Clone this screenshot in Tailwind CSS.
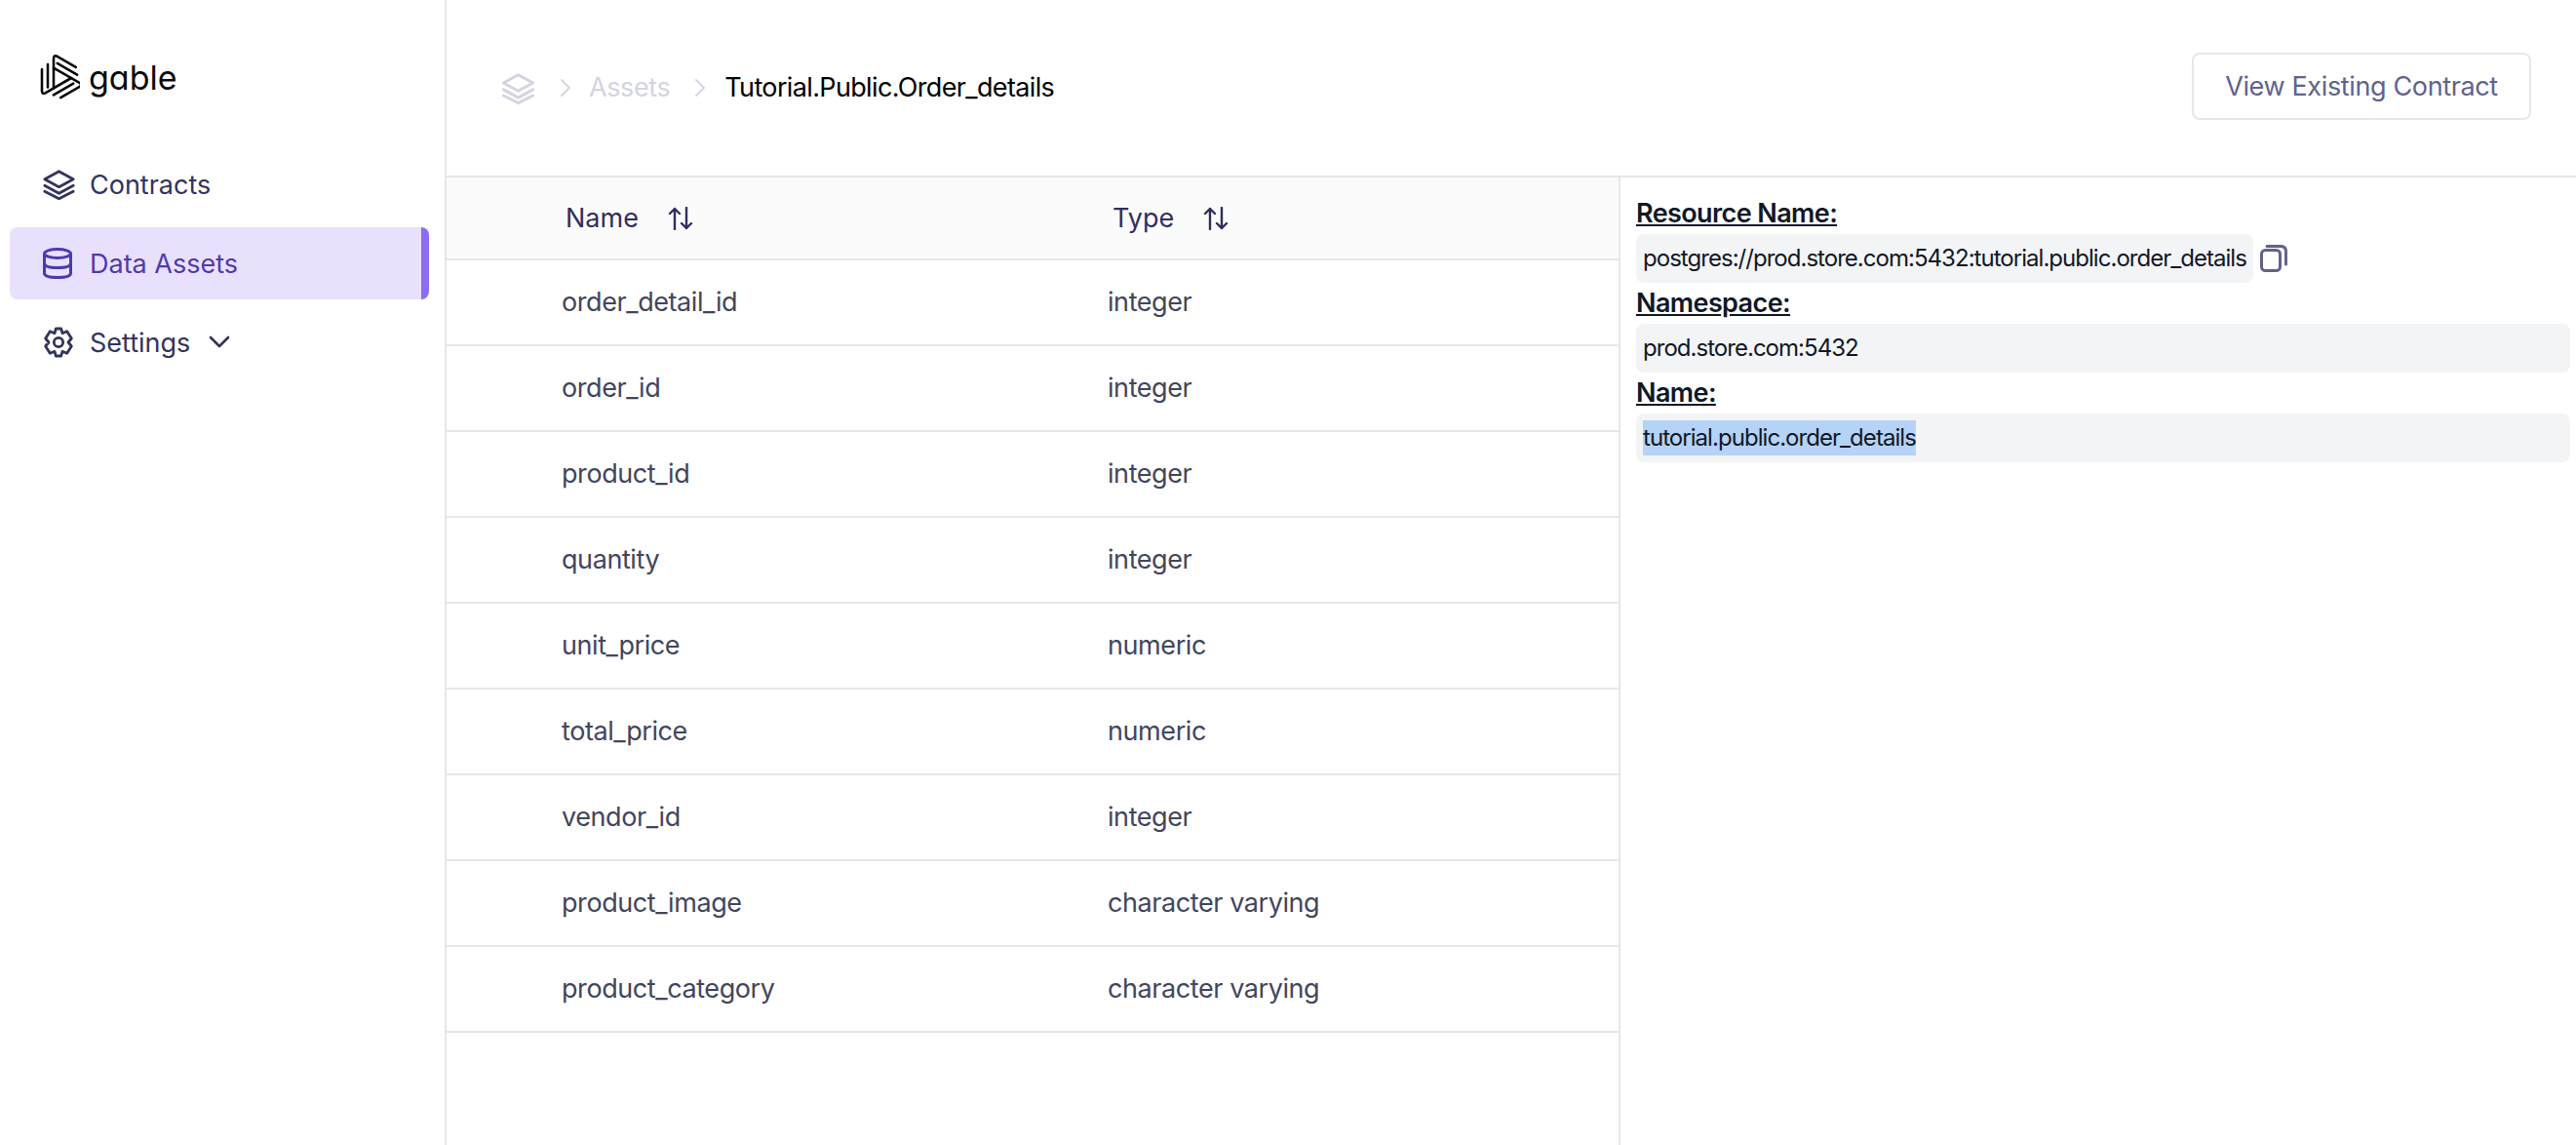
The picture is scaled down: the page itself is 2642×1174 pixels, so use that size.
<!DOCTYPE html>
<html lang="en">
  <head>
    <meta charset="UTF-8" />
    <title>Gable - Data Assets</title>
    <script src="https://cdn.jsdelivr.net/npm/@tailwindcss/browser@4"></script>
  </head>
  <body class="bg-white font-['Inter',sans-serif]">
    <div class="flex h-[1174px] w-[2642px] overflow-hidden">
      <!-- Sidebar -->
      <aside class="w-[458px] shrink-0 border-r-2 border-[#e6e6ee]">
        <div class="flex h-[233px] flex-col">
          <div class="flex items-center pl-[40px] pt-[56px]">
            <svg class="h-[48px] w-[42px]" viewBox="0 0 42 48" fill="none" stroke="#0a0a0a" stroke-width="2.6" stroke-linecap="round" stroke-linejoin="round">
              <g>
                <path d="M3 15 V37 Q3 41 6.5 39.3 L33 24" />
                <path d="M9 10 V33.5" />
              </g>
              <g transform="rotate(120 21 24)">
                <path d="M3 15 V37 Q3 41 6.5 39.3 L33 24" />
                <path d="M9 10 V33.5" />
              </g>
              <g transform="rotate(240 21 24)">
                <path d="M3 15 V37 Q3 41 6.5 39.3 L33 24" />
                <path d="M9 10 V33.5" />
              </g>
            </svg>
            <span class="ml-[9px] text-[34px] leading-[48px] text-[#0a0a0a] [font-feature-settings:'cv11']">gable</span>
          </div>
          <a class="mt-[48px] flex h-[74px] items-center pl-[44px]">
            <svg class="h-[32px] w-[33px]" viewBox="0 0 24 24" fill="none" stroke="#33335f" stroke-width="2.1" stroke-linecap="round" stroke-linejoin="round">
              <path d="M12 2 L23 8 L12 14 L1 8 Z" />
              <path d="M1 13 L12 19 L23 13" />
              <path d="M1 17.5 L12 23 L23 17.5" />
            </svg>
            <span class="ml-[15px] mt-[2px] text-[27px] text-[#33335f]">Contracts</span>
          </a>
        </div>
        <a class="ml-[10px] flex h-[74px] w-[430px] items-center rounded-lg border-r-8 border-[#8b6cf3] bg-[#e9e0fd] pl-[34px]">
          <svg class="h-[32px] w-[30px]" viewBox="0 0 30 32" fill="none" stroke="#4f39ad" stroke-width="3">
            <ellipse cx="15" cy="6" rx="13.5" ry="4.5" />
            <path d="M1.5 6 V26 C1.5 29 7 30.5 15 30.5 C23 30.5 28.5 29 28.5 26 V6" />
            <path d="M1.5 16 C1.5 19 7 20.5 15 20.5 C23 20.5 28.5 19 28.5 16" />
          </svg>
          <span class="ml-[18px] mt-[2px] text-[27px] text-[#4f39ad]">Data Assets</span>
        </a>
        <a class="mt-[7px] flex h-[74px] items-center pl-[44px]">
          <svg class="h-[34px] w-[32px]" viewBox="0 0 24 24" fill="none" stroke="#33335f" stroke-width="2.1" stroke-linejoin="round">
            <path d="M10 1.5 H14 L15 5 L18.5 3.5 L22 9 L19.5 12 L22 15 L18.5 20.5 L15 19 L14 22.5 H10 L9 19 L5.5 20.5 L2 15 L4.5 12 L2 9 L5.5 3.5 L9 5 Z" />
            <circle cx="12" cy="12" r="3.5" />
          </svg>
          <span class="ml-[16px] mt-[2px] text-[27px] text-[#33335f]">Settings</span>
          <svg class="ml-[19px] h-[14px] w-[22px]" viewBox="0 0 22 14" fill="none" stroke="#33335f" stroke-width="2.6" stroke-linecap="round" stroke-linejoin="round">
            <path d="M2 2 L11 11 L20 2" />
          </svg>
        </a>
      </aside>

      <main class="flex min-w-0 flex-1 flex-col">
        <!-- Header -->
        <header class="flex h-[182px] shrink-0 items-start justify-between border-b-2 border-[#e6e6ee] pl-[57px] pr-[46px]">
          <div class="flex h-[180px] items-center">
            <svg class="h-[33px] w-[33px]" viewBox="0 0 24 24" fill="none" stroke="#d3d4e0" stroke-width="2.1" stroke-linecap="round" stroke-linejoin="round">
              <path d="M12 2 L23 8 L12 14 L1 8 Z" />
              <path d="M1 13 L12 19 L23 13" />
              <path d="M1 17.5 L12 23 L23 17.5" />
            </svg>
            <svg class="ml-[27px] h-[18px] w-[10px]" viewBox="0 0 10 18" fill="none" stroke="#d3d4e0" stroke-width="1.8" stroke-linecap="round" stroke-linejoin="round">
              <path d="M1 1 L9 9 L1 17" />
            </svg>
            <span class="ml-[19px] text-[27px] tracking-[-0.4px] text-[#d3d4e0]">Assets</span>
            <svg class="ml-[26px] h-[18px] w-[10px]" viewBox="0 0 10 18" fill="none" stroke="#d3d4e0" stroke-width="1.8" stroke-linecap="round" stroke-linejoin="round">
              <path d="M1 1 L9 9 L1 17" />
            </svg>
            <span class="ml-[20px] text-[27px] tracking-[-0.64px] text-black">Tutorial.Public.Order_details</span>
          </div>
          <button class="mt-[54px] h-[69px] w-[348px] rounded-lg border-2 border-[#e6e6ee] pt-[2px] text-[27px] tracking-[-0.36px] text-[#62628e]">View Existing Contract</button>
        </header>

        <div class="flex min-h-0 flex-1">
          <!-- Columns table -->
          <section class="w-[1204px] shrink-0 border-r-2 border-[#e6e6ee]">
            <div class="grid h-[85px] grid-cols-[683px_1fr] items-center border-b-2 border-[#e6e6ee] bg-[#fbfbfc] text-[27px] text-[#2f2f5f]">
              <div class="flex items-center pl-[122px]">
                <span class="mt-[2px]">Name</span>
                <svg class="ml-[30px] h-[24px] w-[26px]" viewBox="0 0 26 24" fill="none" stroke="#2f2f5f" stroke-width="2.4" stroke-linecap="round" stroke-linejoin="round">
                  <path d="M7 23 V2 M2 7 L7 2 L12 7" />
                  <path d="M19 1 V22 M14 17 L19 22 L24 17" />
                </svg>
              </div>
              <div class="flex items-center">
                <span class="mt-[2px]">Type</span>
                <svg class="ml-[30px] h-[24px] w-[26px]" viewBox="0 0 26 24" fill="none" stroke="#2f2f5f" stroke-width="2.4" stroke-linecap="round" stroke-linejoin="round">
                  <path d="M7 23 V2 M2 7 L7 2 L12 7" />
                  <path d="M19 1 V22 M14 17 L19 22 L24 17" />
                </svg>
              </div>
            </div>
            <div class="grid h-[88px] grid-cols-[678px_1fr] items-center border-b-2 border-[#e6e6ee] pt-[1px] text-[27px] tracking-[-0.42px] text-[#41465f]"><span class="pl-[118px]">order_detail_id</span><span>integer</span></div>
            <div class="grid h-[88px] grid-cols-[678px_1fr] items-center border-b-2 border-[#e6e6ee] pt-[1px] text-[27px] tracking-[-0.42px] text-[#41465f]"><span class="pl-[118px]">order_id</span><span>integer</span></div>
            <div class="grid h-[88px] grid-cols-[678px_1fr] items-center border-b-2 border-[#e6e6ee] pt-[1px] text-[27px] tracking-[-0.42px] text-[#41465f]"><span class="pl-[118px]">product_id</span><span>integer</span></div>
            <div class="grid h-[88px] grid-cols-[678px_1fr] items-center border-b-2 border-[#e6e6ee] pt-[1px] text-[27px] tracking-[-0.42px] text-[#41465f]"><span class="pl-[118px]">quantity</span><span>integer</span></div>
            <div class="grid h-[88px] grid-cols-[678px_1fr] items-center border-b-2 border-[#e6e6ee] pt-[1px] text-[27px] tracking-[-0.42px] text-[#41465f]"><span class="pl-[118px]">unit_price</span><span>numeric</span></div>
            <div class="grid h-[88px] grid-cols-[678px_1fr] items-center border-b-2 border-[#e6e6ee] pt-[1px] text-[27px] tracking-[-0.42px] text-[#41465f]"><span class="pl-[118px]">total_price</span><span>numeric</span></div>
            <div class="grid h-[88px] grid-cols-[678px_1fr] items-center border-b-2 border-[#e6e6ee] pt-[1px] text-[27px] tracking-[-0.42px] text-[#41465f]"><span class="pl-[118px]">vendor_id</span><span>integer</span></div>
            <div class="grid h-[88px] grid-cols-[678px_1fr] items-center border-b-2 border-[#e6e6ee] pt-[1px] text-[27px] tracking-[-0.42px] text-[#41465f]"><span class="pl-[118px]">product_image</span><span>character varying</span></div>
            <div class="grid h-[88px] grid-cols-[678px_1fr] items-center border-b-2 border-[#e6e6ee] pt-[1px] text-[27px] tracking-[-0.42px] text-[#41465f]"><span class="pl-[118px]">product_category</span><span>character varying</span></div>
          </section>

          <!-- Resource details -->
          <section class="flex-1 pl-[16px] pr-[6px] text-[#111827]">
            <h3 class="mt-[16px] h-[42px] text-[27px] font-semibold leading-[42px] tracking-[-0.6px] underline">Resource Name:</h3>
            <div class="flex items-center">
              <div class="h-[50px] rounded-lg bg-[#f3f4f6] px-[7px] text-[24px] leading-[50px] tracking-[-0.97px]">postgres://prod.store.com:5432:tutorial.public.order_details</div>
              <svg class="ml-[7px] h-[28px] w-[28px]" viewBox="0 0 28 28" fill="none" stroke="#62628e" stroke-width="3" stroke-linecap="round" stroke-linejoin="round">
                <rect x="1.5" y="5.5" width="19" height="21" rx="4" />
                <path d="M7 1.5 H21 C24.5 1.5 26.5 3.5 26.5 7 V20" />
              </svg>
            </div>
            <h3 class="h-[42px] text-[27px] font-semibold leading-[42px] tracking-[-0.6px] underline">Namespace:</h3>
            <div class="h-[50px] rounded-lg bg-[#f3f4f6] px-[7px] text-[24px] leading-[50px] tracking-[-0.97px]">prod.store.com:5432</div>
            <h3 class="h-[42px] text-[27px] font-semibold leading-[42px] tracking-[-0.6px] underline">Name:</h3>
            <div class="flex h-[50px] items-center rounded-lg bg-[#f3f4f6] px-[7px] text-[24px] tracking-[-0.95px]"><span class="bg-[#b4d3f6] leading-[36px]">tutorial.public.order_details</span></div>
          </section>
        </div>
      </main>
    </div>
  </body>
</html>
